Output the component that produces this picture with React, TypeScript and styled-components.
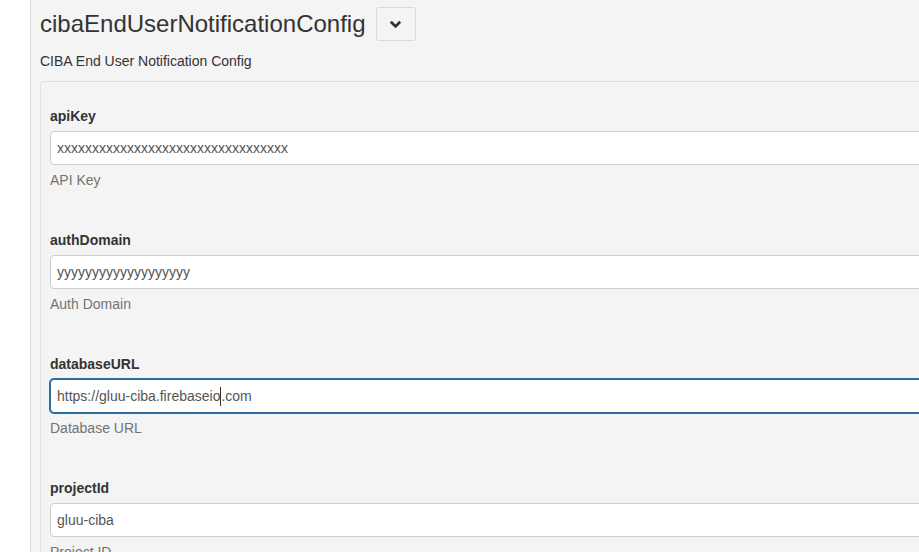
import React from "react";
import styled, { createGlobalStyle } from "styled-components";

const Global = createGlobalStyle`
  html, body { margin: 0; padding: 0; background: #ffffff; }
  body { font-family: "Liberation Sans", Arial, sans-serif; color: #333333; overflow: hidden; }
  * { box-sizing: border-box; }
`;

const Page = styled.div`
  display: flex;
  width: 919px;
  height: 552px;
  overflow: hidden;
`;

const Sidebar = styled.div`
  width: 31px;
  flex: none;
  background: #ffffff;
  border-right: 1px solid #dedede;
`;

const Main = styled.div`
  flex: 1;
  background: #f4f4f4;
  padding: 7px 0 0 9px;
  overflow: hidden;
`;

const TitleRow = styled.div`
  display: flex;
  align-items: center;
  gap: 10px;
  height: 34px;
`;

const Title = styled.h2`
  margin: 0;
  font-size: 24px;
  font-weight: 400;
  line-height: 30px;
  color: #333333;
  white-space: nowrap;
`;

const ToggleButton = styled.button`
  width: 40px;
  height: 34px;
  display: flex;
  align-items: center;
  justify-content: center;
  background: #f4f4f4;
  border: 1px solid #dadada;
  border-radius: 3px;
  padding: 0;
  color: #333333;
`;

const Subtitle = styled.p`
  margin: 10px 0 0;
  font-size: 14px;
  line-height: 20px;
  color: #333333;
`;

const Panel = styled.div`
  margin-top: 10px;
  width: 1000px;
  background: #f4f4f4;
  border: 1px solid #e0e0e0;
  border-radius: 4px;
  padding: 24px 9px 0;
  display: flex;
  flex-direction: column;
`;

const Group = styled.div`
  display: flex;
  flex-direction: column;
  height: 124px;
`;

const Label = styled.label`
  font-size: 14px;
  font-weight: 700;
  line-height: 20px;
  margin-bottom: 5px;
  color: #333333;
`;

const Field = styled.div<{ $focused?: boolean }>`
  height: 34px;
  background: #ffffff;
  border: 1px solid ${(p) => (p.$focused ? "#2b6ca3" : "#cccccc")};
  box-shadow: ${(p) => (p.$focused ? "0 0 0 1px #2b6ca3" : "none")};
  border-radius: 4px;
  padding: 0 6px;
  display: flex;
  align-items: center;
  font-size: 14px;
  color: #555555;
  white-space: nowrap;
`;

const Caret = styled.span`
  display: inline-block;
  width: 1px;
  height: 19px;
  background: #333333;
  vertical-align: middle;
`;

const Help = styled.span`
  margin-top: 5px;
  font-size: 14px;
  line-height: 20px;
  color: #737373;
`;

const Chevron = () => (
  <svg width="13" height="9" viewBox="0 0 13 9">
    <path d="M1.8 1.8 L6.5 6.4 L11.2 1.8" fill="none" stroke="#333" strokeWidth="2.8" />
  </svg>
);

const fields = [
  { label: "apiKey", value: "xxxxxxxxxxxxxxxxxxxxxxxxxxxxxxxxx", help: "API Key" },
  { label: "authDomain", value: "yyyyyyyyyyyyyyyyyyy", help: "Auth Domain" },
  { label: "databaseURL", value: "https://gluu-ciba.firebaseio.com", help: "Database URL", focused: true, caretAt: 28 },
  { label: "projectId", value: "gluu-ciba", help: "Project ID" },
];

export default function App() {
  return (
    <>
      <Global />
      <Page>
        <Sidebar />
        <Main>
          <TitleRow>
            <Title>cibaEndUserNotificationConfig</Title>
            <ToggleButton>
              <Chevron />
            </ToggleButton>
          </TitleRow>
          <Subtitle>CIBA End User Notification Config</Subtitle>
          <Panel>
            {fields.map((f) => (
              <Group key={f.label}>
                <Label>{f.label}</Label>
                <Field $focused={f.focused}>
                  {f.caretAt !== undefined ? (
                    <>
                      {f.value.slice(0, f.caretAt)}
                      <Caret />
                      {f.value.slice(f.caretAt)}
                    </>
                  ) : (
                    f.value
                  )}
                </Field>
                <Help>{f.help}</Help>
              </Group>
            ))}
          </Panel>
        </Main>
      </Page>
    </>
  );
}
